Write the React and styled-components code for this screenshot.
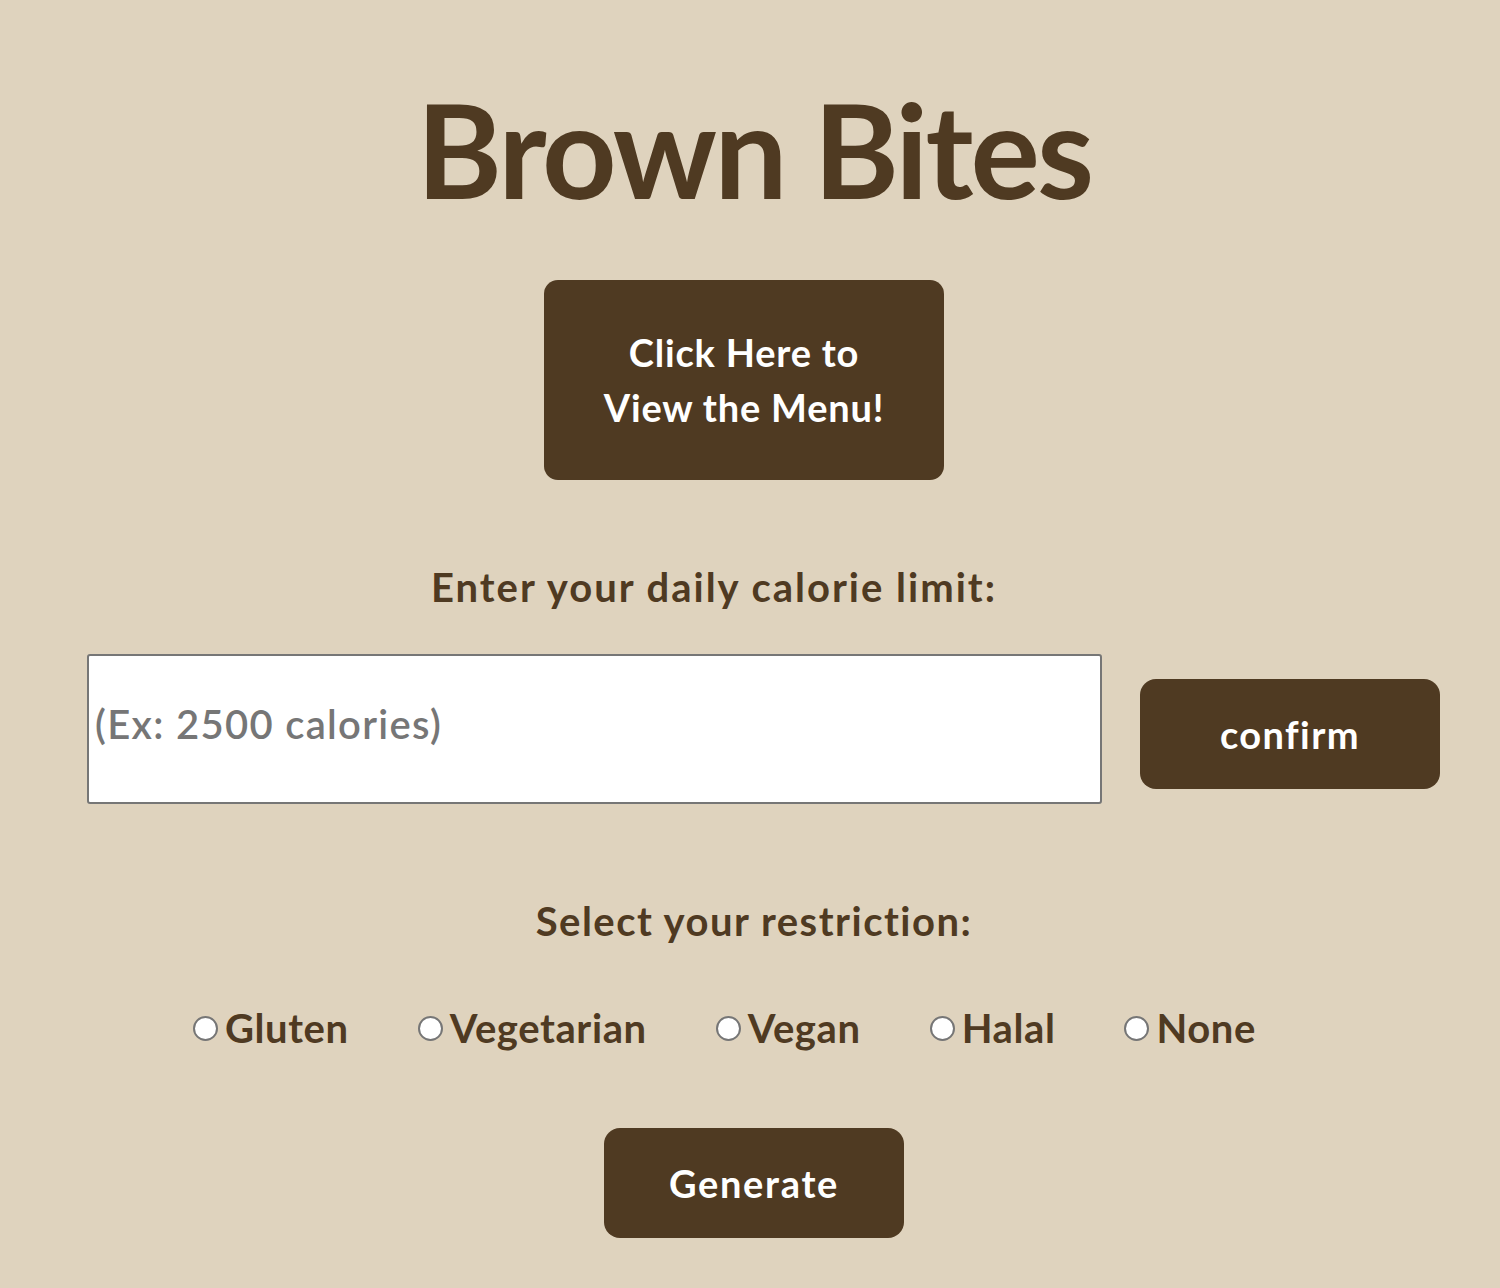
import React, { useState } from "react";
import styled, { createGlobalStyle } from "styled-components";

const GlobalStyle = createGlobalStyle`
  html, body {
    margin: 0;
    padding: 0;
    background: #dfd3be;
  }
  body {
    font-family: "Lato", "Open Sans", sans-serif;
    color: #4f3a22;
  }
`;

const Page = styled.div`
  display: flex;
  flex-direction: column;
  align-items: center;
  min-height: 1288px;
  padding-top: 72px;
  box-sizing: border-box;
`;

const Title = styled.h1`
  margin: 0;
  font-size: 130px;
  font-weight: 700;
  line-height: 160px;
  letter-spacing: -2.8px;
  color: #4f3a22;
  margin-left: 8px;
  transform: translateY(-3px);
`;

const Button = styled.button`
  background: #4f3a22;
  color: #ffffff;
  border: none;
  border-radius: ${({ $radius }) => $radius || 16}px;
  width: ${({ $w }) => $w}px;
  height: ${({ $h }) => $h}px;
  font-family: "Lato", "Open Sans", sans-serif;
  font-size: ${({ $size }) => $size || 38}px;
  font-weight: 700;
  line-height: 55px;
  letter-spacing: ${({ $ls }) => $ls || 0}px;
  cursor: pointer;
  padding: 0;
`;

const MenuButton = styled(Button)`
  margin-top: 48px;
  margin-right: 12px;
  padding: 0 40px;
`;

const Heading = styled.h2`
  margin: 0;
  font-size: 40px;
  font-weight: 700;
  color: #4f3a22;
  line-height: 50px;
  letter-spacing: ${({ $ls }) => $ls}px;
  margin-top: ${({ $top }) => $top}px;
  margin-left: ${({ $shift }) => $shift || 0}px;
`;

const InputRow = styled.div`
  align-self: stretch;
  display: flex;
  align-items: center;
  gap: 38px;
  padding-left: 87px;
  margin-top: 42px;
`;

const CalorieInput = styled.input`
  width: 1015px;
  height: 150px;
  box-sizing: border-box;
  border: 2px solid #767676;
  border-radius: 3px;
  background: #fff;
  padding: 0 6px 10px;
  font-family: "Lato", "Open Sans", sans-serif;
  font-size: 40px;
  font-weight: 600;
  letter-spacing: 1.3px;
  color: #4f3a22;
  outline: none;
  &::placeholder {
    color: #767676;
  }
`;

const ConfirmButton = styled(Button)`
  margin-top: 10px;
`;

const RadioRow = styled.div`
  align-self: stretch;
  display: flex;
  align-items: center;
  gap: 69px;
  padding-left: 193px;
  margin-top: 58px;
`;

const RadioLabel = styled.label`
  display: flex;
  align-items: center;
  gap: 7px;
  font-size: 40px;
  font-weight: 700;
  letter-spacing: 0.6px;
  color: #4f3a22;
  cursor: pointer;
`;

const Radio = styled.input`
  appearance: none;
  margin: 0;
  width: 25px;
  height: 25px;
  border-radius: 50%;
  border: 2px solid #767676;
  background: #fff;
  box-sizing: border-box;
  &:checked {
    border: 7px solid #4f3a22;
  }
`;

const GenerateButton = styled(Button)`
  margin-top: 76px;
  margin-left: 8px;
`;

const options = ["Gluten", "Vegetarian", "Vegan", "Halal", "None"];

export default function App() {
  const [calories, setCalories] = useState("");
  const [restriction, setRestriction] = useState("");

  return (
    <>
      <GlobalStyle />
      <Page>
        <Title>Brown Bites</Title>
        <MenuButton $w={400} $h={200} $radius={14} $ls={0.8}>
          Click Here to View the Menu!
        </MenuButton>
        <Heading $top={82} $shift={-72} $ls={2}>Enter your daily calorie limit:</Heading>
        <InputRow>
          <CalorieInput
            type="text"
            placeholder="(Ex: 2500 calories)"
            value={calories}
            onChange={(e) => setCalories(e.target.value)}
          />
          <ConfirmButton $w={300} $h={110} $ls={1.4}>confirm</ConfirmButton>
        </InputRow>
        <Heading $top={92} $shift={8} $ls={1.5}>Select your restriction:</Heading>
        <RadioRow>
          {options.map((o) => (
            <RadioLabel key={o}>
              <Radio
                type="radio"
                name="restriction"
                value={o}
                checked={restriction === o}
                onChange={() => setRestriction(o)}
              />
              {o}
            </RadioLabel>
          ))}
        </RadioRow>
        <GenerateButton $w={300} $h={110} $ls={1.7}>Generate</GenerateButton>
      </Page>
    </>
  );
}
